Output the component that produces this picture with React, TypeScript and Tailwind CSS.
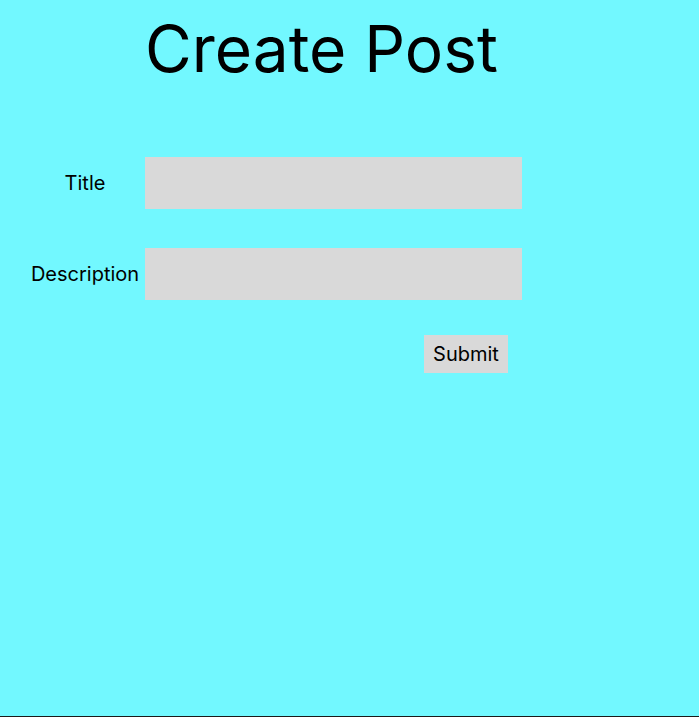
export default function App() {
  return (
    <div
      className="w-[699px] h-[717px] bg-[#72f8ff] border-b border-[#1a1a1a] flex flex-col"
      style={{ fontFamily: "Inter, 'Noto Sans', sans-serif" }}
    >
      <h1 className="ml-[145px] mt-[10px] text-[64px] leading-[78px] text-black font-normal">Create Post</h1>
      <div className="mt-[69px] flex flex-col gap-[39px]">
        <div className="flex items-center">
          <label className="w-[120px] ml-[25px] text-center text-[20px] text-black">Title</label>
          <div className="w-[377px] h-[52px] bg-[#d9d9d9]" />
        </div>
        <div className="flex items-center">
          <label className="w-[120px] ml-[25px] text-center text-[20px] text-black">Description</label>
          <div className="w-[377px] h-[52px] bg-[#d9d9d9]" />
        </div>
      </div>
      <div className="mt-[35px] ml-[424px]">
        <button className="w-[84px] h-[38px] bg-[#d9d9d9] text-[20px] text-black">Submit</button>
      </div>
    </div>
  );
}
